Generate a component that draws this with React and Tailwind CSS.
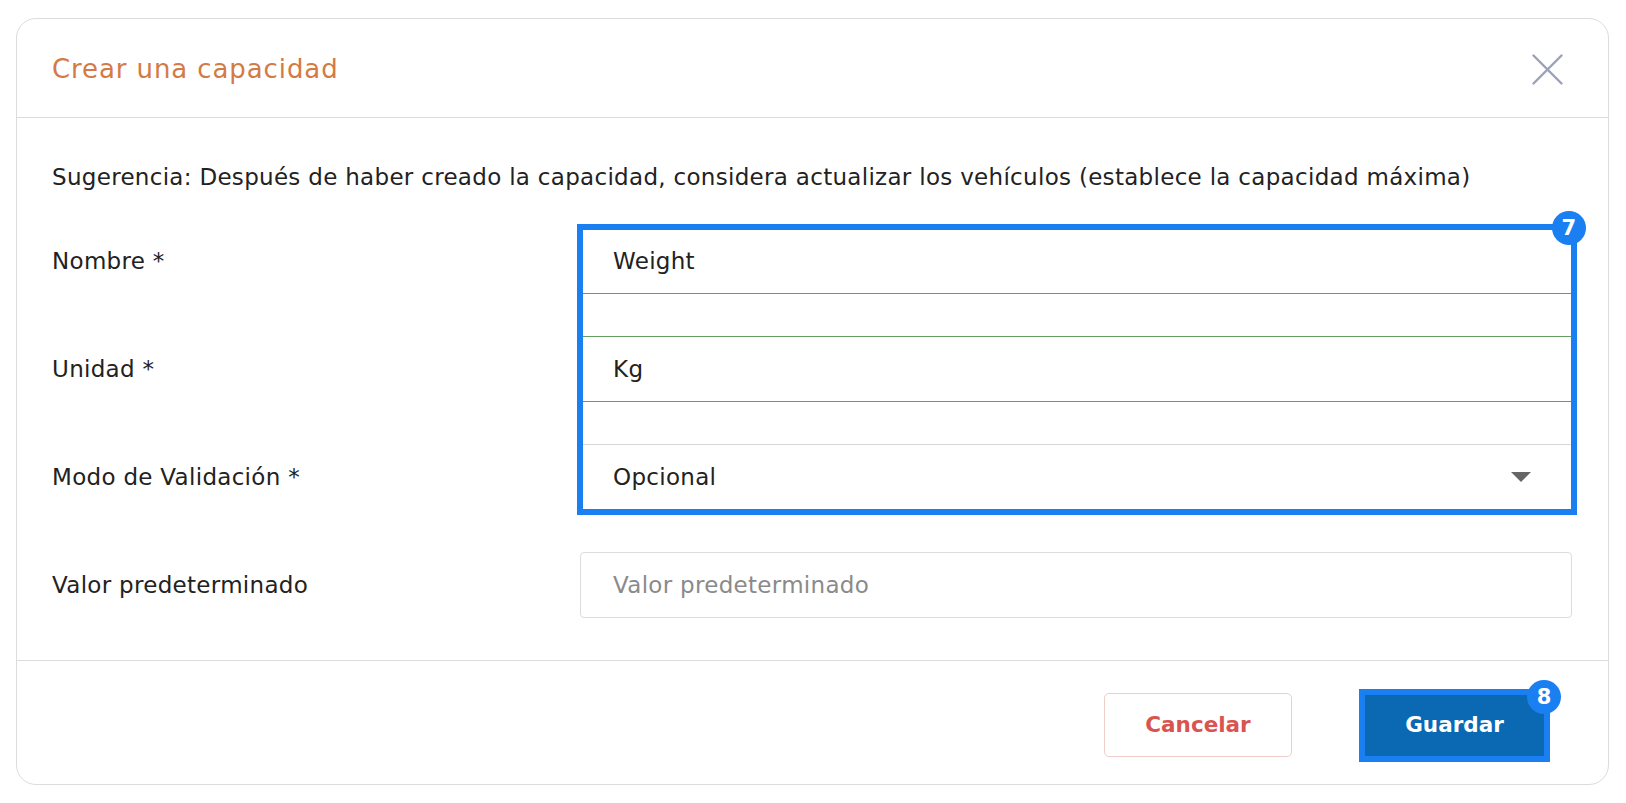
import React from "react";

const font = { fontFamily: '"DejaVu Sans", "Noto Sans", sans-serif' };

function Badge({ n, className }) {
  return (
    <div
      className={
        "absolute w-[34px] h-[34px] rounded-full bg-[#1a7ff0] text-white flex items-center justify-center text-[21px] font-bold leading-none " +
        className
      }
    >
      {n}
    </div>
  );
}

export default function App() {
  return (
    <div
      className="w-full h-[803px] bg-white pt-[18px] pb-[18px] pl-[16px] pr-[17px] text-[#222222]"
      style={font}
    >
      <div className="h-full border border-[#dcdcdc] rounded-[20px] flex flex-col">
        {/* Header */}
        <div className="h-[99px] border-b border-[#dcdcdc] flex items-center justify-between pl-[35px] pr-[45px] shrink-0">
          <div className="text-[26px] text-[#d47a44] tracking-[0.9px] mt-[2px]">Crear una capacidad</div>
          <svg width="31" height="31" viewBox="0 0 31 31" className="mt-[2px]">
            <path d="M1.5 1.5 L29.5 29.5 M29.5 1.5 L1.5 29.5" stroke="#9ba1b9" strokeWidth="2.4" strokeLinecap="round" />
          </svg>
        </div>

        {/* Body */}
        <div className="flex-1 pt-[44px] pl-[35px] pr-[36px] text-[23px] tracking-[0.3px]">
          <div className="leading-[30px] mb-[36px]">
            Sugerencia: Después de haber creado la capacidad, considera actualizar los vehículos (establece la capacidad máxima)
          </div>

          <div className="flex flex-col gap-[42px]">
            <div className="relative flex flex-col gap-[42px]">
              {/* Nombre */}
              <div className="flex items-center">
                <div className="w-[528px]">Nombre *</div>
                <div className="flex-1 h-[66px] border border-[#62a062] flex items-center pl-[32px]">
                  Weight
                </div>
              </div>
              {/* Unidad */}
              <div className="flex items-center">
                <div className="w-[528px]">Unidad *</div>
                <div className="flex-1 h-[66px] border border-[#62a062] flex items-center pl-[32px]">
                  Kg
                </div>
              </div>
              {/* Modo */}
              <div className="flex items-center">
                <div className="w-[528px]">Modo de Validación *</div>
                <div className="flex-1 h-[66px] border border-[#d8d8d8] flex items-center justify-between pl-[32px] pr-[40px]">
                  <span>Opcional</span>
                  <svg width="20" height="10" viewBox="0 0 20 10">
                    <path d="M0 0 L20 0 L10 10 Z" fill="#666666" />
                  </svg>
                </div>
              </div>

              {/* highlight overlay */}
              <div className="absolute left-[525px] right-[-5px] top-[-4px] bottom-[-5px] border-[6px] border-[#1a7ff0] pointer-events-none" />
              <Badge n="7" className="right-[-14px] top-[-17px]" />
            </div>

            {/* Valor */}
            <div className="flex items-center">
              <div className="w-[528px]">Valor predeterminado</div>
              <div className="flex-1 h-[66px] border border-[#dcdcdc] rounded-[4px] flex items-center pl-[32px] text-[#8a8a8a]">
                Valor predeterminado
              </div>
            </div>
          </div>
        </div>

        {/* Footer */}
        <div className="border-t border-[#dcdcdc] pt-[32px] pb-[27px] pr-[61px] flex justify-end items-center gap-[70px] shrink-0">
          <button className="w-[188px] h-[64px] border-[1.5px] border-[#efcdc8] rounded-[5px] text-[#d9544f] font-bold text-[21.5px] bg-white">
            Cancelar
          </button>
          <div className="relative">
            <button className="w-[185px] h-[64px] bg-[#0b69b3] text-white font-bold text-[21.5px] rounded-[4px]">
              Guardar
            </button>
            <div className="absolute left-[-3px] right-[-3px] top-[-4px] bottom-[-5px] border-[6px] border-[#1a7ff0] pointer-events-none" />
            <Badge n="8" className="right-[-14px] top-[-13px]" />
          </div>
        </div>
      </div>
    </div>
  );
}
